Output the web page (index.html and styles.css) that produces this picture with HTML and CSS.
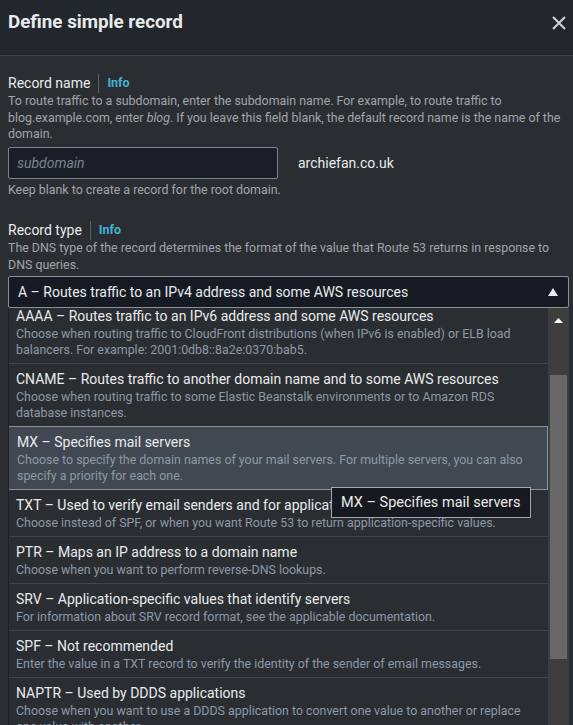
FILE: index.html
```html
<!DOCTYPE html>
<html lang="en">
<head>
<meta charset="utf-8">
<title>Define simple record</title>
<link rel="stylesheet" href="styles.css">
</head>
<body>
<div class="modal">
  <header class="modal-header">
    <h2 class="modal-title">Define simple record</h2>
    <button class="close" aria-label="Close">
      <svg width="14" height="14" viewBox="0 0 14 14"><path d="M1 1 L13 13 M13 1 L1 13" stroke="#d1d5db" stroke-width="2" fill="none"/></svg>
    </button>
  </header>
  <div class="modal-body">
    <div class="field">
      <div class="label-row"><span class="label">Record name</span><span class="sep"></span><a class="info">Info</a></div>
      <p class="desc">To route traffic to a subdomain, enter the subdomain name. For example, to route traffic to blog.example.com, enter <i>blog</i>. If you leave this field blank, the default record name is the name of the domain.</p>
      <div class="input-row">
        <div class="input">subdomain</div>
        <span class="domain">archiefan.co.uk</span>
      </div>
      <p class="desc constraint">Keep blank to create a record for the root domain.</p>
    </div>
    <div class="field">
      <div class="label-row"><span class="label">Record type</span><span class="sep"></span><a class="info">Info</a></div>
      <p class="desc">The DNS type of the record determines the format of the value that Route 53 returns in response to DNS queries.</p>
      <div class="select">
        <span>A – Routes traffic to an IPv4 address and some AWS resources</span>
        <svg class="caret" width="10" height="8" viewBox="0 0 10 8"><path d="M5 0 L10 8 L0 8 Z" fill="#e9ebed"/></svg>
      </div>
      <div class="dropdown">
        <ul class="options">
          <li class="option first"><div class="opt-title">AAAA – Routes traffic to an IPv6 address and some AWS resources</div><div class="opt-desc">Choose when routing traffic to CloudFront distributions (when IPv6 is enabled) or ELB load balancers. For example: 2001:0db8::8a2e:0370:bab5.</div></li>
          <li class="option"><div class="opt-title">CNAME – Routes traffic to another domain name and to some AWS resources</div><div class="opt-desc">Choose when routing traffic to some Elastic Beanstalk environments or to Amazon RDS database instances.</div></li>
          <li class="option active"><div class="opt-title">MX – Specifies mail servers</div><div class="opt-desc">Choose to specify the domain names of your mail servers. For multiple servers, you can also specify a priority for each one.</div></li>
          <li class="option"><div class="opt-title">TXT – Used to verify email senders and for application-specific values</div><div class="opt-desc">Choose instead of SPF, or when you want Route 53 to return application-specific values.</div></li>
          <li class="option"><div class="opt-title">PTR – Maps an IP address to a domain name</div><div class="opt-desc">Choose when you want to perform reverse-DNS lookups.</div></li>
          <li class="option"><div class="opt-title">SRV – Application-specific values that identify servers</div><div class="opt-desc">For information about SRV record format, see the applicable documentation.</div></li>
          <li class="option"><div class="opt-title">SPF – Not recommended</div><div class="opt-desc">Enter the value in a TXT record to verify the identity of the sender of email messages.</div></li>
          <li class="option"><div class="opt-title">NAPTR – Used by DDDS applications</div><div class="opt-desc">Choose when you want to use a DDDS application to convert one value to another or replace one value with another.</div></li>
        </ul>
        <div class="scrollbar">
          <svg class="sb-arrow" width="9" height="5" viewBox="0 0 9 5"><path d="M4.5 0 L9 5 L0 5 Z" fill="#ffffff"/></svg>
          <div class="sb-thumb"></div>
        </div>
      </div>
    </div>
  </div>
  <div class="tooltip">MX – Specifies mail servers</div>
</div>
</body>
</html>
```
FILE: styles.css
```css
* { box-sizing: border-box; }
html, body { margin: 0; padding: 0; height: 100%; overflow: hidden; }
body {
  background: #2a2e33;
  font-family: Roboto, "Noto Sans", Arial, sans-serif;
  color: #e9ebed;
}
.modal { position: relative; height: 725px; overflow: hidden; }
.modal-header {
  height: 56px;
  background: #22262d;
  border-bottom: 1px solid #3c4047;
  display: flex;
  justify-content: space-between;
  align-items: flex-start;
  padding: 10px 7px 0 8px;
}
.modal-title {
  margin: 0;
  font-size: 18.8px;
  line-height: 24px;
  font-weight: 700;
  color: #e9ebed;
}
.close {
  background: none;
  border: 0;
  padding: 0;
  margin-top: 6px;
  width: 14px;
  height: 14px;
  display: block;
}
.close svg { display: block; }
.modal-body { padding: 17px 4px 0 8px; }
.field + .field { margin-top: 22px; }
.label-row { display: flex; align-items: center; height: 20px; }
.label { font-size: 14px; line-height: 20px; color: #e9ebed; }
.sep { width: 1px; height: 19px; background: #5a5f66; margin: 0 8px 0 8px; }
.info { font-size: 12.5px; font-weight: 700; color: #42b4d3; line-height: 20px; }
.desc {
  margin: 0;
  font-size: 12.4px;
  line-height: 16.5px;
  color: #a0a5ab;
}
.desc i { font-style: italic; }
.input-row { display: flex; align-items: center; margin-top: 4px; }
.input {
  width: 270px;
  height: 32px;
  background: #1a1f27;
  border: 1px solid #7d838a;
  border-radius: 2px;
  padding: 0 8px;
  font-size: 14px;
  font-style: italic;
  line-height: 30px;
  color: #7d838a;
}
.domain { margin-left: 20px; font-size: 14px; color: #e9ebed; }
.constraint { margin-top: 3px; }
.select {
  margin-top: 3px;
  height: 32px;
  background: #161b23;
  border: 1px solid #8a9097;
  border-radius: 2px;
  display: flex;
  align-items: center;
  justify-content: space-between;
  padding: 0 10px 0 9px;
  font-size: 14px;
  color: #e9ebed;
}
.caret { display: block; }
.dropdown {
  display: flex;
  height: 420px;
  border-left: 1px solid #1e2227;
}
.options {
  list-style: none;
  margin: 0;
  padding: 0;
  flex: 1;
  overflow: hidden;
  background: #2a2e33;
}
.option {
  border-top: 1px solid #414750;
  padding: 5px 8px 5px 7px;
}
.option.first { margin-top: -8px; border-top: 0; padding-top: 6px; }
.option.active {
  background: #414852;
  border: 1px solid #8a939c;
  margin-left: -1px;
  padding-left: 8px;
}
.option.active + .option { border-top: 0; }
.opt-title { font-size: 14px; line-height: 20px; color: #e9ebed; }
.opt-desc { font-size: 12.4px; line-height: 16px; color: #8d99a6; }
.scrollbar {
  width: 21px;
  background: #3e3e3e;
  display: flex;
  flex-direction: column;
  align-items: center;
  padding-top: 10px;
}
.sb-arrow { display: block; }
.sb-thumb {
  margin-top: 52px;
  width: 17px;
  height: 284px;
  background: #686868;
}
.tooltip {
  position: absolute;
  left: 331px;
  top: 487px;
  height: 31px;
  padding: 0 10px 0 9px;
  background: #16191f;
  border: 1px solid #a3a8ad;
  font-size: 14.5px;
  line-height: 29px;
  color: #e9ebed;
  white-space: nowrap;
}
```
